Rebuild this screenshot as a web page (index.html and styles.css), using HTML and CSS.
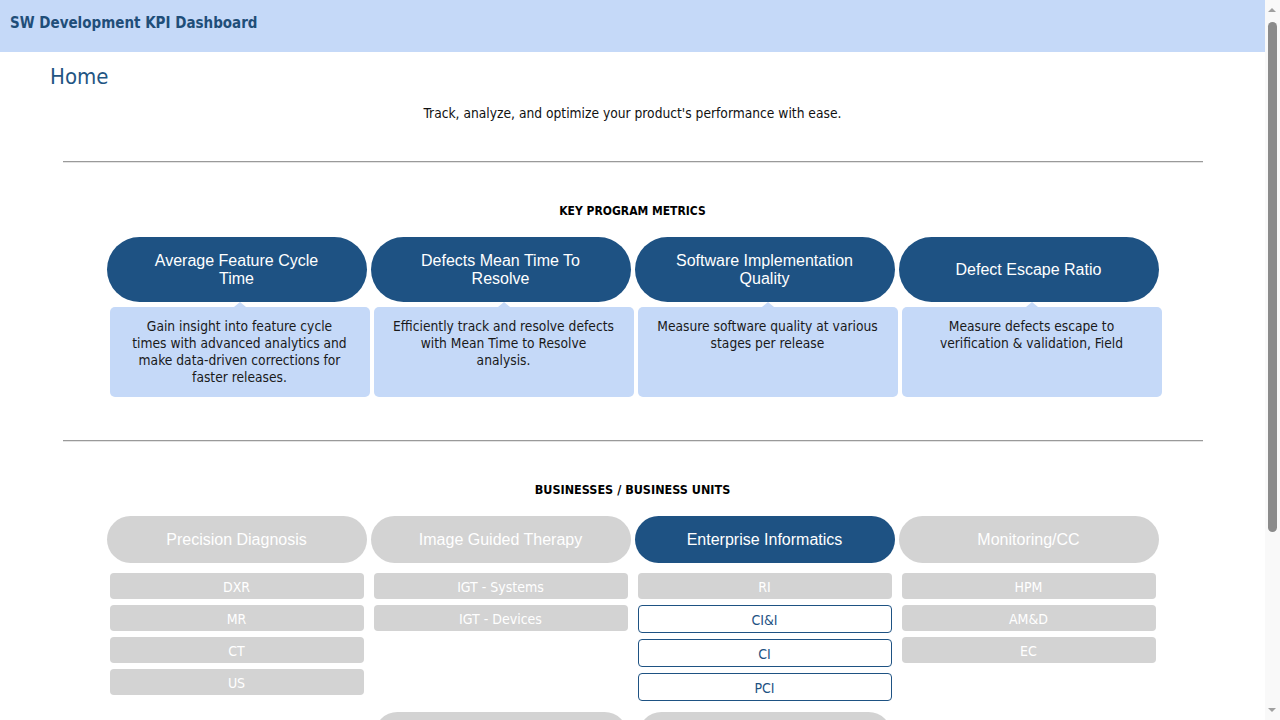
FILE: index.html
```html
<!DOCTYPE html>
<html lang="en">
<head>
<meta charset="utf-8">
<title>SW Development KPI Dashboard</title>
<link rel="stylesheet" href="styles.css">
</head>
<body>
<header class="topbar">
  <div class="brand">SW Development KPI Dashboard</div>
</header>
<main class="page">
  <h1 class="page-title">Home</h1>
  <p class="tagline">Track, analyze, and optimize your product's performance with ease.</p>
  <div class="container">
    <hr class="divider">
    <h2 class="section-title">KEY PROGRAM METRICS</h2>
    <div class="metrics">
      <div class="metric">
        <div class="metric-pill">Average Feature Cycle<br>Time</div>
        <div class="metric-desc">Gain insight into feature cycle times with advanced analytics and make data-driven corrections for faster releases.</div>
      </div>
      <div class="metric">
        <div class="metric-pill">Defects Mean Time To<br>Resolve</div>
        <div class="metric-desc">Efficiently track and resolve defects with Mean Time to Resolve analysis.</div>
      </div>
      <div class="metric">
        <div class="metric-pill">Software Implementation<br>Quality</div>
        <div class="metric-desc">Measure software quality at various stages per release</div>
      </div>
      <div class="metric">
        <div class="metric-pill">Defect Escape Ratio</div>
        <div class="metric-desc">Measure defects escape to verification &amp; validation, Field</div>
      </div>
    </div>
    <hr class="divider divider-second">
    <h2 class="section-title bu-title">BUSINESSES / BUSINESS UNITS</h2>
    <div class="bus">
      <div class="bu">
        <div class="bu-pill">Precision Diagnosis</div>
        <div class="units">
          <div class="unit">DXR</div>
          <div class="unit">MR</div>
          <div class="unit">CT</div>
          <div class="unit">US</div>
        </div>
      </div>
      <div class="bu">
        <div class="bu-pill">Image Guided Therapy</div>
        <div class="units">
          <div class="unit">IGT - Systems</div>
          <div class="unit">IGT - Devices</div>
        </div>
      </div>
      <div class="bu">
        <div class="bu-pill active">Enterprise Informatics</div>
        <div class="units">
          <div class="unit">RI</div>
          <div class="unit enabled">CI&amp;I</div>
          <div class="unit enabled">CI</div>
          <div class="unit enabled">PCI</div>
        </div>
      </div>
      <div class="bu">
        <div class="bu-pill">Monitoring/CC</div>
        <div class="units">
          <div class="unit">HPM</div>
          <div class="unit">AM&amp;D</div>
          <div class="unit">EC</div>
        </div>
      </div>
    </div>
    <div class="bus bus-second">
      <div class="bu narrow">
        <div class="bu-pill">Personal Health</div>
        <div class="units">
          <div class="unit">PH - Oral</div>
          <div class="unit">PH - Grooming</div>
        </div>
      </div>
      <div class="bu narrow">
        <div class="bu-pill">Connected Care</div>
        <div class="units">
          <div class="unit">CC - Sleep</div>
          <div class="unit">CC - Respiratory</div>
        </div>
      </div>
    </div>
  </div>
</main>
<div class="scrollbar" aria-hidden="true">
  <span class="sb-arrow sb-up"></span>
  <span class="sb-thumb"></span>
  <span class="sb-arrow sb-down"></span>
</div>
</body>
</html>
```
FILE: styles.css
```css
html, body {
  margin: 0;
  padding: 0;
}
body {
  margin-right: 15px;
  font-family: "DejaVu Sans Condensed", "DejaVu Sans", sans-serif;
  color: #000;
  background: #fff;
}
.topbar {
  height: 52px;
  background: #c5d9f8;
  display: flex;
  align-items: center;
  padding-left: 10px;
}
.brand {
  font-weight: bold;
  font-size: 15px;
  color: #1f4e79;
  margin-top: -7px;
}
.page {
  padding-bottom: 140px;
}
.page-title {
  margin: 12px 0 0 50px;
  font-size: 22px;
  font-weight: normal;
  color: #1f5583;
  line-height: 26px;
}
.tagline {
  margin: 15px 0 0;
  text-align: center;
  font-size: 13.7px;
  line-height: 16px;
  color: #111;
}
.container {
  max-width: 1140px;
  margin: 0 auto;
}
.divider {
  margin: 40px 0 0;
  border: 0;
  border-top: 1px solid #9a9a9a;
  border-bottom: 1px solid #e4e4e4;
  height: 0;
}
.divider-second {
  margin-top: 43px;
}
.section-title {
  margin: 41px 0 0;
  text-align: center;
  font-size: 12px;
  line-height: 14px;
  font-weight: bold;
}
.bu-title {
  font-size: 12.5px;
}
.metrics {
  display: flex;
  justify-content: center;
  gap: 4px;
  margin-top: 19px;
}
.metric {
  width: 260px;
  display: flex;
  flex-direction: column;
}
.metric-pill {
  height: 65px;
  border-radius: 33px;
  background: #1e5283;
  color: #fff;
  font-family: "Liberation Sans", Arial, sans-serif;
  font-size: 16px;
  line-height: 18px;
  display: flex;
  align-items: center;
  justify-content: center;
  text-align: center;
}
.metric-desc {
  position: relative;
  margin: 5px 0 0 3px;
  width: 260px;
  height: 90px;
  box-sizing: border-box;
  padding: 11px 19px 0;
  background: #c5d9f8;
  border-radius: 5px;
  text-align: center;
  font-size: 13.7px;
  line-height: 17px;
  color: #1a1a1a;
}
.metric-desc::before {
  content: "";
  position: absolute;
  top: -5px;
  left: 50%;
  margin-left: -6px;
  border-left: 6px solid transparent;
  border-right: 6px solid transparent;
  border-bottom: 5px solid #c5d9f8;
}
.bus {
  display: flex;
  justify-content: center;
  align-items: flex-start;
  gap: 4px;
  margin-top: 19px;
}
.bus-second {
  margin-top: 11px;
}
.bu {
  width: 260px;
  display: flex;
  flex-direction: column;
}
.bu-pill {
  height: 47px;
  border-radius: 24px;
  background: #d3d3d3;
  color: #fff;
  font-family: "Liberation Sans", Arial, sans-serif;
  font-size: 16px;
  display: flex;
  align-items: center;
  justify-content: center;
}
.bu-pill.active {
  background: #1e5283;
}
.narrow .bu-pill {
  margin: 0 3px;
}
.units {
  display: flex;
  flex-direction: column;
  gap: 6px;
  margin: 10px 3px 0;
}
.unit {
  height: 26px;
  line-height: 28px;
  border-radius: 4px;
  background: #d3d3d3;
  color: #fff;
  font-size: 14px;
  text-align: center;
}
.unit.enabled {
  background: #fff;
  border: 1px solid #1e5283;
  color: #1e5283;
}
.scrollbar {
  position: fixed;
  top: 0;
  right: 0;
  width: 15px;
  height: 100vh;
  background: #f9f9f9;
}
.sb-thumb {
  position: absolute;
  top: 22px;
  left: 3px;
  width: 9px;
  height: 510px;
  border-radius: 5px;
  background: #8b8b8b;
}
.sb-arrow {
  position: absolute;
  left: 3px;
  width: 0;
  height: 0;
  border-left: 4px solid transparent;
  border-right: 4px solid transparent;
}
.sb-up {
  top: 8px;
  border-bottom: 4px solid #a0a0a0;
}
.sb-down {
  bottom: 8px;
  border-top: 4px solid #a0a0a0;
}
```
